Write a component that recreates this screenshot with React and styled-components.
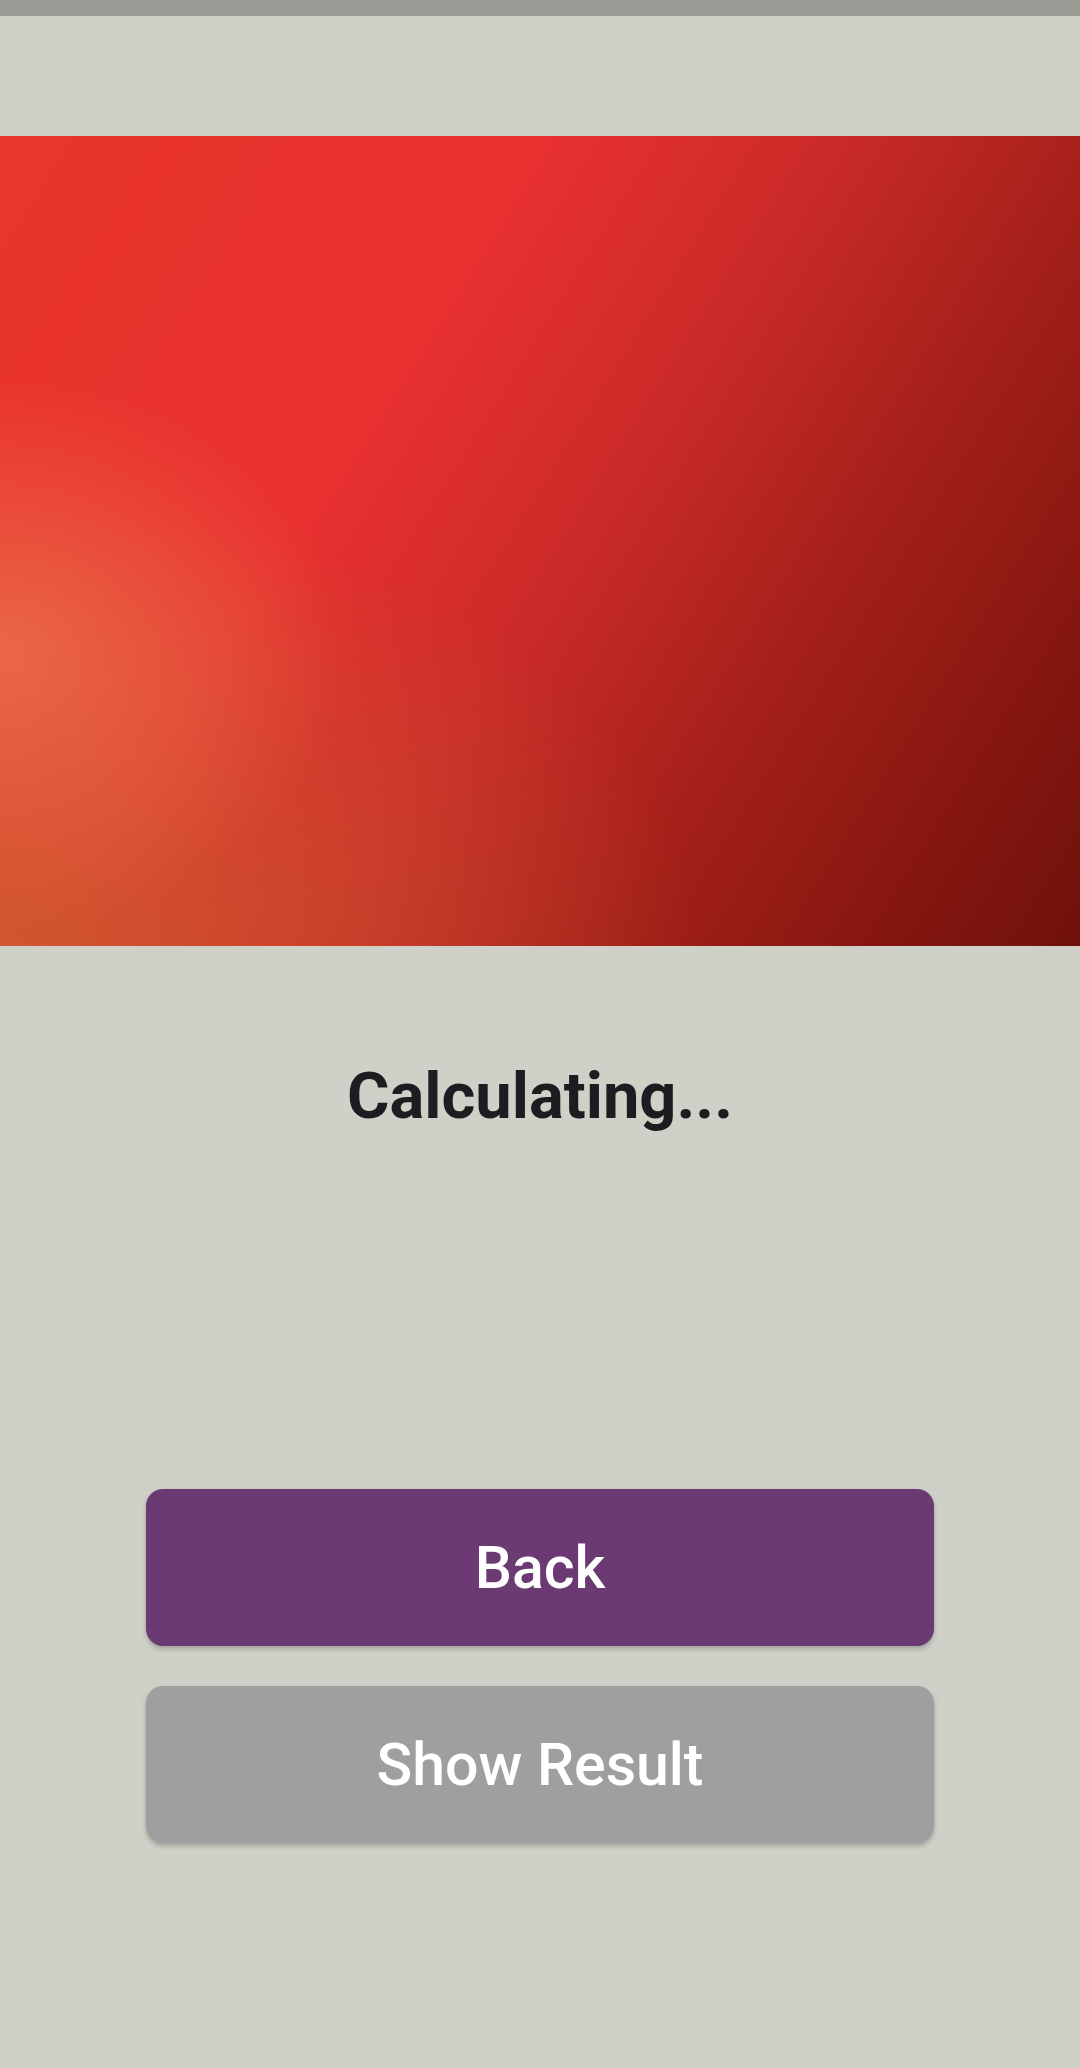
import styled, { createGlobalStyle } from "styled-components"

const GlobalStyle = createGlobalStyle`
html, body {
  margin: 0;
  padding: 0;
  background: #cfd0c7;
  font-family: Roboto, "Noto Sans", sans-serif;
}
`;

const Screen = styled.div`
display: flex;
flex-direction: column;
width: 1080px;
min-height: 2068px;
background: #cfd0c7;
`;

const StatusBar = styled.div`
height: 16px;
background: #9a9b95;
`;

// album art placeholder: soft red gradient with an orange glow on the left
const Cover = styled.div`
margin-top: 120px;
height: 810px;
background:
  radial-gradient(ellipse 32% 34% at 0% 64%, rgba(238,116,78,0.75), rgba(238,116,78,0) 100%),
  radial-gradient(ellipse 65% 55% at 0% 100%, rgba(200,96,46,0.8), rgba(200,96,46,0) 100%),
  linear-gradient(122deg, #e9352b 0%, #e93130 34%, #cc2b29 52%, #a52019 70%, #871710 86%, #70110c 100%);
`;

const Status = styled.h1`
margin: 112px 0 0;
text-align: center;
font-family: Roboto, sans-serif;
font-size: 65px;
font-weight: 700;
line-height: 76px;
color: #1d1c20;
`;

const Actions = styled.div`
display: flex;
flex-direction: column;
align-items: center;
gap: 40px;
margin-top: 355px;
`;

const ActionButton = styled.button`
width: 788px;
height: 157px;
border: none;
border-radius: 17px;
background: ${p => p.tone === "primary" ? "#6c3a73" : "#9f9f9f"};
color: #ffffff;
font-family: Roboto, sans-serif;
font-size: 59px;
font-weight: 500;
box-shadow: 0 3px 5px rgba(0,0,0,0.22);
cursor: pointer;
`;

const App = () => {
  return <Screen>
    <GlobalStyle />
    <StatusBar />
    <Cover />
    <Status>Calculating...</Status>
    <Actions>
      <ActionButton tone="primary">Back</ActionButton>
      <ActionButton tone="muted">Show Result</ActionButton>
    </Actions>
  </Screen>
}

export default App
